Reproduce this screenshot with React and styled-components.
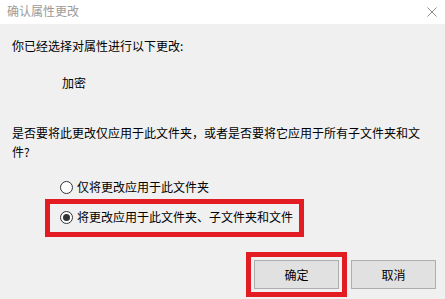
import styled, { createGlobalStyle } from 'styled-components';

const GlobalStyle = createGlobalStyle`
  body {
    margin: 0;
    background: #f0f0f0;
  }
`;

export default function App() {
  return (
    <>
      <GlobalStyle />
      <DialogStyle>
        <TitleBarStyle>
          <TitleStyle>确认属性更改</TitleStyle>
          <svg width="10" height="10" viewBox="0 0 10 10">
            <path d="M0.5 0.5 L9.5 9.5 M9.5 0.5 L0.5 9.5" stroke="#8a8a8a" strokeWidth="1" fill="none" />
          </svg>
        </TitleBarStyle>
        <BodyStyle>
          <IntroStyle>你已经选择对属性进行以下更改:</IntroStyle>
          <ChangeStyle>加密</ChangeStyle>
          <QuestionStyle>是否要将此更改仅应用于此文件夹，或者是否要将它应用于所有子文件夹和文件?</QuestionStyle>
          <RadioGroupStyle>
            <RadioRowStyle>
              <RadioStyle />
              仅将更改应用于此文件夹
            </RadioRowStyle>
            <RadioRowStyle $highlight>
              <RadioStyle $checked />
              将更改应用于此文件夹、子文件夹和文件
            </RadioRowStyle>
          </RadioGroupStyle>
          <ButtonRowStyle>
            <HighlightStyle>
              <ButtonStyle>确定</ButtonStyle>
            </HighlightStyle>
            <ButtonStyle>取消</ButtonStyle>
          </ButtonRowStyle>
        </BodyStyle>
      </DialogStyle>
    </>
  );
}

const DialogStyle = styled.div`
  width: 445px;
  height: 299px;
  overflow: hidden;
  background: #f0f0f0;
  font-family: "Noto Sans CJK SC", "Noto Sans", sans-serif;
  font-size: 12px;
  color: #000;
`;

const TitleBarStyle = styled.div`
  height: 24px;
  background: #ffffff;
  display: flex;
  align-items: center;
  justify-content: space-between;
  padding: 0 8px 0 7px;
  box-sizing: border-box;
`;

const TitleStyle = styled.span`
  color: #9a9a9a;
  line-height: 20px;
  margin-top: -2px;
`;

const BodyStyle = styled.div`
  padding: 0 9px 0 12px;
`;

const IntroStyle = styled.div`
  margin-top: 12px;
  line-height: 20px;
`;

const ChangeStyle = styled.div`
  margin-top: 17px;
  padding-left: 50px;
  line-height: 20px;
`;

const QuestionStyle = styled.div`
  margin-top: 30px;
  width: 412px;
  line-height: 19px;
`;

const RadioGroupStyle = styled.div`
  margin-top: 16px;
  display: flex;
  flex-direction: column;
  align-items: flex-start;
  gap: 2px;
`;

const RadioRowStyle = styled.div`
  display: flex;
  align-items: center;
  gap: 4px;
  line-height: 20px;
  height: 20px;
  padding-left: 48px;
  ${(props) => props.$highlight && `
    margin-left: 33px;
    padding: 3px 6px 5px 10px;
    border: 5px solid #e31b23;
  `}
`;

const RadioStyle = styled.span`
  width: 11px;
  height: 11px;
  border: 1px solid #333;
  border-radius: 50%;
  background: #fff;
  display: inline-flex;
  align-items: center;
  justify-content: center;
  flex-shrink: 0;
  &::after {
    content: '';
    width: 7px;
    height: 7px;
    border-radius: 50%;
    background: ${(props) => (props.$checked ? '#333' : 'transparent')};
  }
`;

const ButtonRowStyle = styled.div`
  margin-top: 15px;
  display: flex;
  justify-content: flex-end;
  align-items: center;
  gap: 4px;
`;

const HighlightStyle = styled.div`
  border: 5px solid #e31b23;
  padding: 3px;
  display: flex;
`;

const ButtonStyle = styled.button`
  width: 85px;
  height: 29px;
  background: #e1e1e1;
  border: 1px solid #adadad;
  font-family: inherit;
  font-size: 12px;
  color: #000;
  padding: 0;
`;
